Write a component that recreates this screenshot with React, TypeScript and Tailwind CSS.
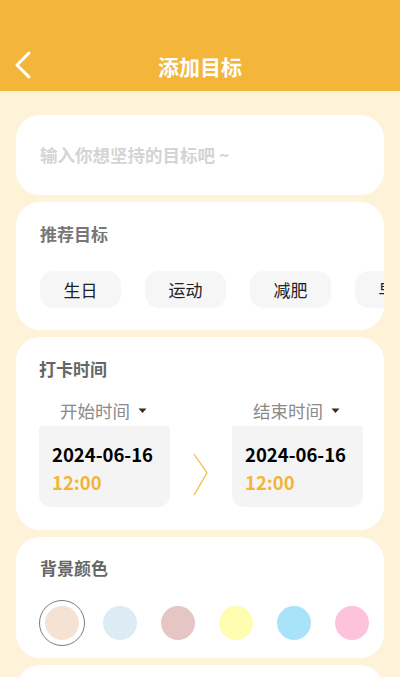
const FONT = { fontFamily: '"Noto Sans CJK SC", "Noto Sans", sans-serif' };

const TAGS = ["生日", "运动", "减肥", "早起"];
const COLORS = ["#F6E2D2", "#DCEBF4", "#E6C6C4", "#FEFDB2", "#A9E3FA", "#FDC3DA"];

function TimeBox({ label }: { label: string }) {
  return (
    <div className="flex flex-col w-[131px]">
      <div className="flex items-center h-[30px] pl-[21px] gap-[8px]">
        <span className="text-[17.5px] text-[#8a8a8a]">{label}</span>
        <svg width="9" height="6" viewBox="0 0 9 6">
          <path d="M0.5 0.5 L8.5 0.5 L4.5 5 Z" fill="#3a2a1e" />
        </svg>
      </div>
      <div className="bg-[#f4f4f4] rounded-t-[3px] rounded-b-[12px] h-[81px] pl-[13px] pt-[16px]">
        <div className="text-[18.5px] font-bold text-black leading-[24px]">2024-06-16</div>
        <div className="text-[18.5px] font-bold text-[#F2B53A] leading-[24px] mt-[4px]">12:00</div>
      </div>
    </div>
  );
}

export default function App() {
  return (
    <div className="w-[400px] h-[677px] overflow-hidden bg-[#FEF3D8]" style={FONT}>
      <div className="h-[91px] bg-[#F3B63A] relative flex items-end justify-center pb-[11px]">
        <svg className="absolute left-[14px] top-[51px]" width="18" height="28" viewBox="0 0 18 28">
          <path d="M15 2 L3 14 L15 26" fill="none" stroke="white" strokeWidth="3" strokeLinecap="round" strokeLinejoin="round" />
        </svg>
        <span className="text-white text-[21px] font-bold leading-[28px]">添加目标</span>
      </div>

      <div className="px-[16px] pt-[24px] flex flex-col gap-[7px]">
        <div className="bg-white rounded-[24px] h-[80px] flex items-center px-[24px]">
          <span className="text-[17.5px] font-bold text-[#d4d4d4]">输入你想坚持的目标吧 ~</span>
        </div>

        <div className="bg-white rounded-[24px] h-[128px] pl-[24px] pt-[20px] overflow-hidden">
          <div className="text-[17px] font-bold text-[#777] leading-[24px]">推荐目标</div>
          <div className="flex gap-[24px] mt-[25px] w-[400px]">
            {TAGS.map((t) => (
              <div
                key={t}
                className="w-[81px] h-[37px] shrink-0 rounded-[14px] bg-[#f6f6f6] flex items-center justify-center text-[17px] text-[#222]"
              >
                {t}
              </div>
            ))}
          </div>
        </div>

        <div className="bg-white rounded-[24px] h-[193px] pl-[23px] pt-[20px]">
          <div className="text-[17px] font-bold text-[#666] leading-[24px]">打卡时间</div>
          <div className="flex items-start mt-[15px]">
            <TimeBox label="开始时间" />
            <div className="w-[62px] flex justify-center pt-[57px]">
              <svg width="16" height="44" viewBox="0 0 16 44">
                <path d="M1 1 L14 20 L1 42" fill="none" stroke="#F2B53A" strokeWidth="1.2" />
              </svg>
            </div>
            <TimeBox label="结束时间" />
          </div>
        </div>

        <div className="bg-white rounded-[24px] h-[121px] pl-[24px] pt-[19px]">
          <div className="text-[17px] font-bold text-[#666] leading-[24px]">背景颜色</div>
          <div className="flex items-center mt-[20px] -ml-[1px]">
            {COLORS.map((c, i) => (
              <div key={c} className="w-[46px] h-[46px] mr-[12px] flex items-center justify-center shrink-0">
                <div
                  className={`w-[46px] h-[46px] rounded-full flex items-center justify-center ${i === 0 ? "border-[1.5px] border-[#7a7a7a]" : ""}`}
                >
                  <div className="w-[34px] h-[34px] rounded-full" style={{ backgroundColor: c }} />
                </div>
              </div>
            ))}
          </div>
        </div>

        <div className="bg-white rounded-[24px] h-[80px]" />
      </div>
    </div>
  );
}
